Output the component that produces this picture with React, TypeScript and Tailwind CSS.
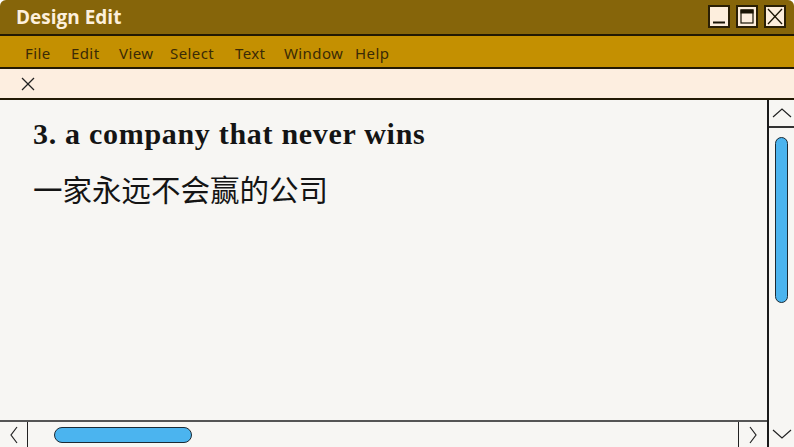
import React from 'react';

const menuItems: { label: string; width: string }[] = [
  { label: 'File', width: 'w-[46px]' },
  { label: 'Edit', width: 'w-[48px]' },
  { label: 'View', width: 'w-[51px]' },
  { label: 'Select', width: 'w-[65px]' },
  { label: 'Text', width: 'w-[49px]' },
  { label: 'Window', width: 'w-[71px]' },
  { label: 'Help', width: 'w-auto' },
];

function TitleButton({ kind }: { kind: 'min' | 'max' | 'close' }): JSX.Element {
  return (
    <div className="flex h-[23px] w-[22px] items-center justify-center border-2 border-[#2a1f05] bg-[#fdeedd]">
      <svg width="18" height="19" viewBox="0 0 18 19" fill="none" stroke="#1a1405">
        {kind === 'min' && <line x1="3" y1="15.5" x2="15" y2="15.5" strokeWidth="2" />}
        {kind === 'max' && (
          <>
            <rect x="3" y="3" width="12" height="13" strokeWidth="1.2" />
            <rect x="3" y="3" width="12" height="3" fill="#1a1405" />
          </>
        )}
        {kind === 'close' && (
          <>
            <line x1="2" y1="2" x2="16" y2="17" strokeWidth="1.3" />
            <line x1="16" y1="2" x2="2" y2="17" strokeWidth="1.3" />
          </>
        )}
      </svg>
    </div>
  );
}

export default function App(): JSX.Element {
  return (
    <div className="flex h-[447px] w-[794px] flex-col overflow-hidden rounded-t-[6px] bg-[#f7f6f3]">
      {/* title bar */}
      <div className="flex h-[36px] shrink-0 items-center justify-between border-b-2 border-[#221904] bg-[#86650a] pl-[16px] pr-[8px]">
        <span className="pt-[1px] font-['Open_Sans',sans-serif] text-[19px] font-bold leading-none text-[#fdf0dc]">
          Design Edit
        </span>
        <div className="flex gap-[6px] pb-[2px]">
          <TitleButton kind="min" />
          <TitleButton kind="max" />
          <TitleButton kind="close" />
        </div>
      </div>

      {/* menu bar */}
      <div className="flex h-[33px] shrink-0 items-center border-b-2 border-[#221904] bg-[#c49001] pl-[25px] pt-[3px] font-['Noto_Sans',sans-serif] text-[15px] tracking-[0.4px] text-[#3a2a06]">
        {menuItems.map((m) => (
          <span key={m.label} className={m.width}>
            {m.label}
          </span>
        ))}
      </div>

      {/* toolbar */}
      <div className="flex h-[31px] shrink-0 items-center border-b-2 border-[#221904] bg-[#fdeee0] pl-[21px]">
        <svg width="14" height="14" viewBox="0 0 14 14" stroke="#222" strokeWidth="1.3">
          <line x1="1" y1="1" x2="13" y2="13" />
          <line x1="13" y1="1" x2="1" y2="13" />
        </svg>
      </div>

      {/* main */}
      <div className="flex min-h-0 flex-1">
        <div className="flex min-w-0 flex-1 flex-col">
          <div className="flex-1 pl-[33px] pt-[15px]">
            <h1 className="font-['Liberation_Serif',serif] text-[30px] font-bold leading-[38px] tracking-[0.7px] text-[#141414]">
              3. a company that never wins
            </h1>
            <p className="mt-[15px] font-['Noto_Sans_CJK_SC',sans-serif] text-[29.5px] leading-[40px] text-[#141414]">
              一家永远不会赢的公司
            </p>
          </div>
          {/* horizontal scrollbar */}
          <div className="flex h-[27px] shrink-0 items-center border-t-2 border-[#555]">
            <div className="flex h-full w-[28px] items-center justify-center border-r border-[#222]">
              <svg width="10" height="18" viewBox="0 0 10 18" fill="none" stroke="#222" strokeWidth="1.2">
                <polyline points="8,1 2,9 8,17" />
              </svg>
            </div>
            <div className="flex flex-1 items-center pl-[26px]">
              <div className="h-[16px] w-[138px] rounded-full border border-[#1c2a33] bg-[#4bb4ef]" />
            </div>
            <div className="flex h-full w-[29px] items-center justify-center border-l border-[#222]">
              <svg width="10" height="18" viewBox="0 0 10 18" fill="none" stroke="#222" strokeWidth="1.2">
                <polyline points="2,1 8,9 2,17" />
              </svg>
            </div>
          </div>
        </div>

        {/* vertical scrollbar */}
        <div className="flex w-[27px] shrink-0 flex-col border-l-2 border-[#1a1a1a]">
          <div className="flex h-[28px] items-center justify-center border-b-2 border-[#333]">
            <svg width="20" height="10" viewBox="0 0 20 10" fill="none" stroke="#222" strokeWidth="1.2">
              <polyline points="1,9 10,1 19,9" />
            </svg>
          </div>
          <div className="flex flex-1 justify-center pt-[9px]">
            <div className="h-[166px] w-[13px] rounded-full border border-[#1c2a33] bg-[#4bb4ef]" />
          </div>
          <div className="flex h-[27px] items-center justify-center">
            <svg width="20" height="10" viewBox="0 0 20 10" fill="none" stroke="#222" strokeWidth="1.2">
              <polyline points="1,1 10,9 19,1" />
            </svg>
          </div>
        </div>
      </div>
    </div>
  );
}
